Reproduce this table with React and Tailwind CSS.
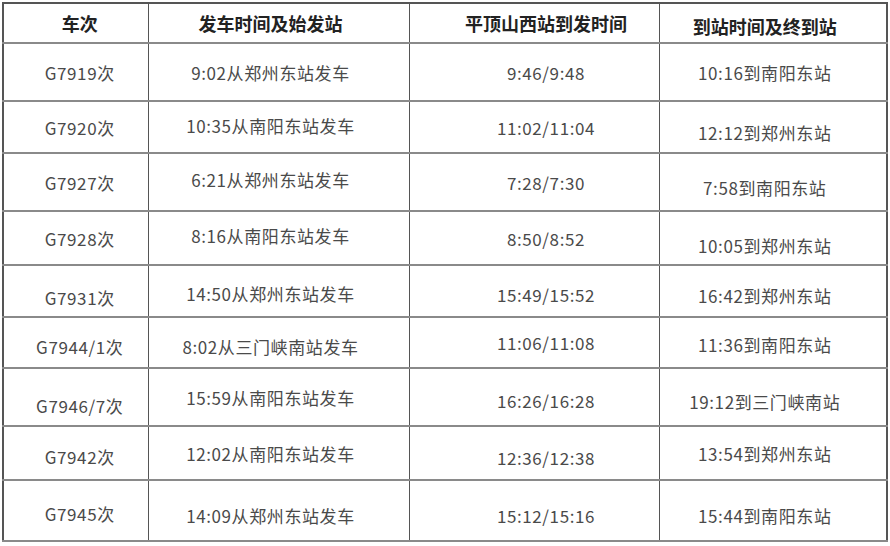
const FONT = "font-['Noto_Sans_CJK_SC','Noto_Sans',sans-serif]";

const HEAD = ['车次', '发车时间及始发站', '平顶山西站到发时间', '到站时间及终到站'];

// rows: [train, depart, via, arrive], plus row height and small per-cell nudges
const ROWS = [
  { h: 'h-[58px]', cells: ['G7919次', '9:02从郑州东站发车', '9:46/9:48', '10:16到南阳东站'], dy: ['', '', '', ''] },
  { h: 'h-[52px]', cells: ['G7920次', '10:35从南阳东站发车', '11:02/11:04', '12:12到郑州东站'], dy: ['', '-translate-y-[2px]', '', 'translate-y-[5px]'] },
  { h: 'h-[58px]', cells: ['G7927次', '6:21从郑州东站发车', '7:28/7:30', '7:58到南阳东站'], dy: ['', '-translate-y-[3px]', '', 'translate-y-[5px]'] },
  { h: 'h-[54px]', cells: ['G7928次', '8:16从南阳东站发车', '8:50/8:52', '10:05到郑州东站'], dy: ['', '-translate-y-[3px]', '', 'translate-y-[7px]'] },
  { h: 'h-[52px]', cells: ['G7931次', '14:50从郑州东站发车', '15:49/15:52', '16:42到郑州东站'], dy: ['translate-y-[6px]', 'translate-y-[2px]', 'translate-y-[3px]', 'translate-y-[4px]'] },
  { h: 'h-[51px]', cells: ['G7944/1次', '8:02从三门峡南站发车', '11:06/11:08', '11:36到南阳东站'], dy: ['translate-y-[4px]', 'translate-y-[4px]', '', 'translate-y-[2px]'] },
  { h: 'h-[58px]', cells: ['G7946/7次', '15:59从南阳东站发车', '16:26/16:28', '19:12到三门峡南站'], dy: ['translate-y-[8px]', '', 'translate-y-[3px]', 'translate-y-[4px]'] },
  { h: 'h-[54px]', cells: ['G7942次', '12:02从南阳东站发车', '12:36/12:38', '13:54到郑州东站'], dy: ['translate-y-[3px]', '', 'translate-y-[4px]', ''] },
  { h: 'h-[61px]', cells: ['G7945次', '14:09从郑州东站发车', '15:12/15:16', '15:44到南阳东站'], dy: ['translate-y-[3px]', 'translate-y-[5px]', 'translate-y-[5px]', 'translate-y-[5px]'] },
];

const COLS = ['w-[145px] pl-2', 'w-[261px] pr-4', 'w-[250px] pl-6', 'w-[228px] pr-4'];

export default function App() {
  return (
    <div className={`min-h-[546px] w-[890px] bg-white pl-[2px] pt-[2px] ${FONT}`}>
      <table className="w-[884px] table-fixed border-collapse border-2 border-[#555]">
        <thead>
          <tr className="h-[40px]">
            {HEAD.map((t, i) => (
              <th
                key={t}
                className={`${COLS[i]} border border-[#555] text-center align-middle text-[18px] font-bold leading-none text-[#222]`}
              >
                <span className={i === 3 ? 'inline-block translate-y-[3px]' : 'inline-block'}>{t}</span>
              </th>
            ))}
          </tr>
        </thead>
        <tbody>
          {ROWS.map((r) => (
            <tr key={r.cells[0]} className={r.h}>
              {r.cells.map((c, i) => (
                <td
                  key={i}
                  className={`${COLS[i]} border-x border-x-[#555] border-y-2 border-y-[#8a8a8a] text-center align-middle text-[17px] leading-none text-[#4a4a4a]`}
                >
                  <span className={`inline-block tracking-[0.6px] ${r.dy[i]}`}>{c}</span>
                </td>
              ))}
            </tr>
          ))}
        </tbody>
      </table>
    </div>
  );
}
